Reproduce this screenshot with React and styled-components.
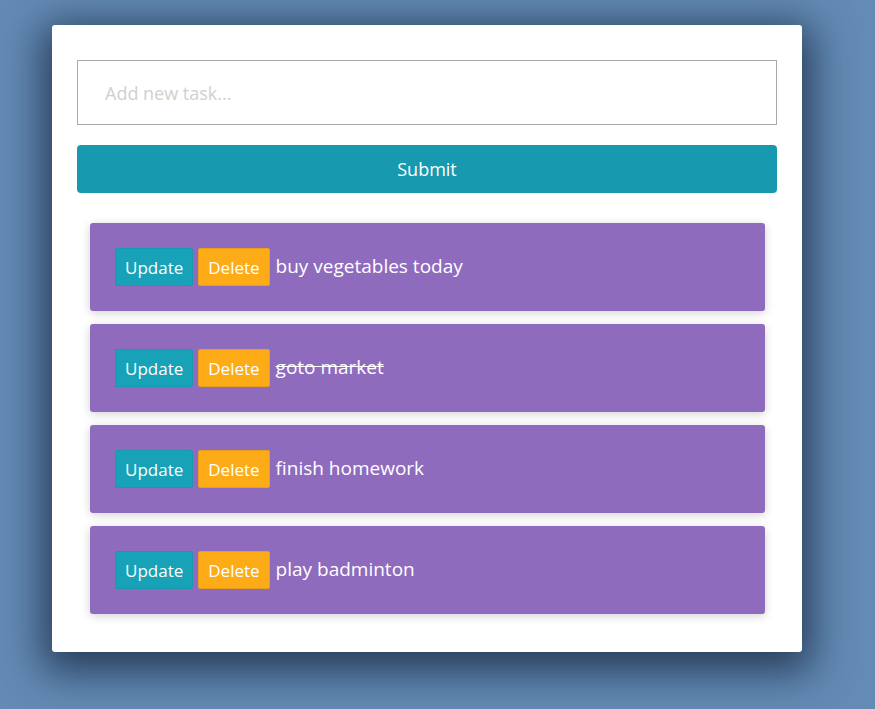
import React, { useState } from "react";
import styled, { createGlobalStyle } from "styled-components";

const GlobalStyle = createGlobalStyle`
  html, body {
    margin: 0;
    padding: 0;
    background-color: #638bb5;
    font-family: "Open Sans", "Noto Sans", sans-serif;
  }
  * {
    box-sizing: border-box;
  }
`;

const Page = styled.div`
  min-height: 709px;
  padding: 25px 0 0 52px;
`;

const Card = styled.div`
  width: 750px;
  background: #fff;
  border-radius: 3px;
  padding: 35px 25px 38px;
  box-shadow: 0 10px 40px 10px rgba(20, 35, 60, 0.75);
`;

const TaskInput = styled.input`
  display: block;
  width: 100%;
  height: 65px;
  border: 1px solid #aaa;
  padding: 0 27px;
  font-family: inherit;
  font-size: 18px;
  color: #333;
  outline: none;
  &::placeholder {
    color: #d0d0d0;
  }
`;

const SubmitButton = styled.button`
  display: block;
  width: 100%;
  height: 48px;
  margin-top: 20px;
  border: none;
  border-radius: 4px;
  background: #1799b0;
  color: #fff;
  font-family: inherit;
  font-size: 18px;
`;

const List = styled.div`
  display: flex;
  flex-direction: column;
  gap: 13px;
  margin: 30px 12px 0 13px;
`;

const Item = styled.div`
  display: flex;
  align-items: center;
  gap: 5px;
  height: 88px;
  padding: 0 25px;
  background: #8f6bbd;
  border-radius: 3px;
  box-shadow: 0 2px 10px rgba(0, 0, 0, 0.18);
`;

const ActionButton = styled.button`
  height: 38px;
  padding: 0 9px;
  border-radius: 2px;
  border: 1px solid ${p => (p.$variant === "delete" ? "#e89e1a" : "#1799b0")};
  background: ${p => (p.$variant === "delete" ? "#fdac18" : "#17a2b8")};
  color: #fff;
  font-family: inherit;
  font-size: 17px;
`;

const TaskText = styled.span`
  color: #fff;
  font-size: 19px;
  margin-left: 1px;
  margin-top: -3px;
  text-decoration: ${p => (p.$done ? "line-through" : "none")};
`;

const tasks = [
  { text: "buy vegetables today", done: false },
  { text: "goto market", done: true },
  { text: "finish homework", done: false },
  { text: "play badminton", done: false }
];

const App = () => {
  const [value, setValue] = useState("");
  return (
    <Page>
      <GlobalStyle />
      <Card>
        <TaskInput
          placeholder="Add new task..."
          value={value}
          onChange={e => setValue(e.target.value)}
        />
        <SubmitButton>Submit</SubmitButton>
        <List>
          {tasks.map(t => (
            <Item key={t.text}>
              <ActionButton>Update</ActionButton>
              <ActionButton $variant="delete">Delete</ActionButton>
              <TaskText $done={t.done}>{t.text}</TaskText>
            </Item>
          ))}
        </List>
      </Card>
    </Page>
  );
};

export default App;
